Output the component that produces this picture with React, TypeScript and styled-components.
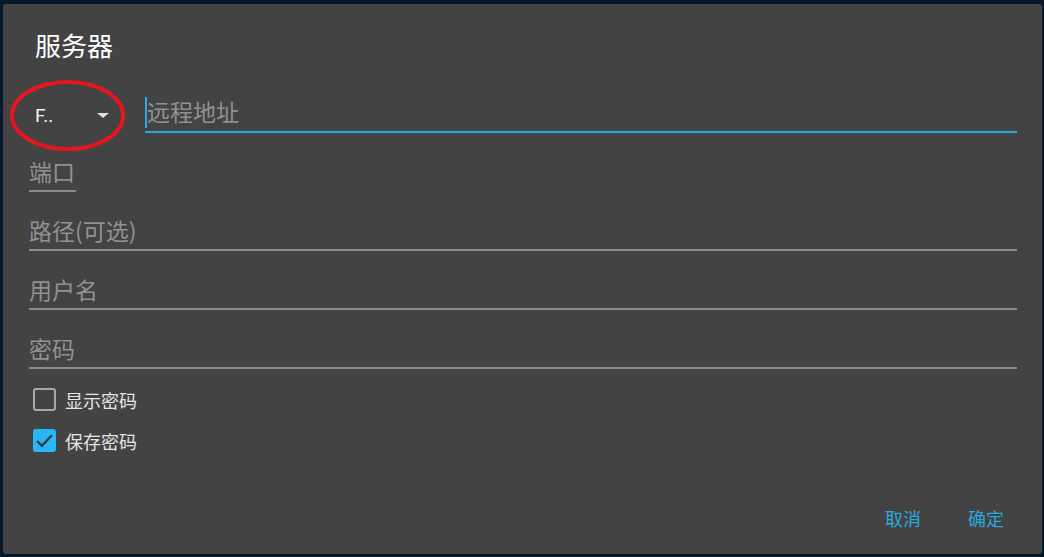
import React from "react";
import styled, { createGlobalStyle } from "styled-components";

const Global = createGlobalStyle`
  html, body { margin: 0; padding: 0; background: #06192a; }
  body { width: 1044px; height: 557px; overflow: hidden; }
  #root { padding: 4px 0 0 3px; }
  * { box-sizing: border-box; }
`;

const CJK = `"Noto Sans CJK SC", "Noto Sans", sans-serif`;

const Dialog = styled.div`
  width: 1039px;
  height: 550px;
  background: #434343;
  border-radius: 3px;
  padding: 28px 25px 0 26px;
  display: flex;
  flex-direction: column;
  font-family: ${CJK};
`;

const Title = styled.div`
  font-size: 26px;
  line-height: 26px;
  color: #ffffff;
  margin-left: 6px;
`;

const TopRow = styled.div`
  position: relative;
  display: flex;
  gap: 24px;
  margin-top: 32px;
  height: 43px;
`;

const Select = styled.div`
  align-self: flex-end;
  width: 92px;
  height: 36px;
  display: flex;
  align-items: center;
  justify-content: space-between;
  padding: 0 12px 0 6px;
  font-family: Roboto, "Noto Sans", sans-serif;
  font-size: 19px;
  color: #f2f2f2;
`;

const Arrow = styled.span`
  width: 0;
  height: 0;
  border-left: 6px solid transparent;
  border-right: 6px solid transparent;
  border-top: 5px solid #e0e0e0;
`;

const Ring = styled.svg`
  position: absolute;
  left: -22px;
  top: -14px;
  pointer-events: none;
`;

const Field = styled.div<{ $active?: boolean; $width?: number }>`
  display: flex;
  align-items: flex-end;
  flex: ${(p) => (p.$width ? "none" : "1")};
  width: ${(p) => (p.$width ? `${p.$width}px` : "auto")};
  padding-bottom: ${(p) => (p.$active ? 3 : 2)}px;
  border-bottom: 2px solid ${(p) => (p.$active ? "#29a9e1" : "#8b8b8b")};
`;

const Caret = styled.span`
  width: 2px;
  height: 31px;
  background: #29a9e1;
  flex: none;
`;

const Input = styled.input`
  flex: 1;
  min-width: 0;
  height: 31px;
  border: none;
  outline: none;
  background: transparent;
  padding: 0 0 4px 0;
  font-family: ${CJK};
  font-size: 23px;
  color: #ffffff;
  &::placeholder {
    color: #919191;
  }
`;

const FieldRow = styled.div`
  display: flex;
  margin-top: 24px;
`;

const Checks = styled.div`
  display: flex;
  flex-direction: column;
  margin-top: 10px;
`;

const CheckRow = styled.label`
  display: flex;
  align-items: center;
  height: 41px;
  padding-left: 4px;
  gap: 9px;
  font-size: 18px;
  color: #e4e4e4;
`;

const Box = styled.span<{ $checked?: boolean }>`
  width: 23px;
  height: 23px;
  border-radius: 3px;
  display: flex;
  align-items: center;
  justify-content: center;
  background: ${(p) => (p.$checked ? "#29b6f6" : "transparent")};
  border: ${(p) => (p.$checked ? "none" : "2px solid #a8a8a8")};
`;

const Actions = styled.div`
  margin-top: auto;
  display: flex;
  justify-content: flex-end;
  gap: 31px;
  padding: 0 5px 18px 0;
`;

const Button = styled.button`
  height: 36px;
  padding: 0 8px;
  border: none;
  background: transparent;
  font-family: ${CJK};
  font-size: 18px;
  color: #2aa8de;
  cursor: pointer;
`;

export default function App() {
  return (
    <>
      <Global />
      <Dialog>
        <Title>服务器</Title>
        <TopRow>
          <Select>
            <span>F..</span>
            <Arrow />
          </Select>
          <Field $active>
            <Caret />
            <Input placeholder="远程地址" />
          </Field>
          <Ring width="122" height="80" viewBox="0 0 122 80">
            <ellipse cx="60.5" cy="39.5" rx="55.5" ry="33.5" fill="none" stroke="#e8151f" strokeWidth="4" />
          </Ring>
        </TopRow>
        <FieldRow>
          <Field $width={47}>
            <Input placeholder="端口" />
          </Field>
        </FieldRow>
        <FieldRow>
          <Field>
            <Input placeholder="路径(可选)" />
          </Field>
        </FieldRow>
        <FieldRow>
          <Field>
            <Input placeholder="用户名" />
          </Field>
        </FieldRow>
        <FieldRow>
          <Field>
            <Input placeholder="密码" type="password" />
          </Field>
        </FieldRow>
        <Checks>
          <CheckRow>
            <Box />
            显示密码
          </CheckRow>
          <CheckRow>
            <Box $checked>
              <svg width="21" height="21" viewBox="0 0 24 24">
                <path d="M3.5 12.5l5.5 5.5L20.5 6" fill="none" stroke="#2c3a40" strokeWidth="2.6" />
              </svg>
            </Box>
            保存密码
          </CheckRow>
        </Checks>
        <Actions>
          <Button>取消</Button>
          <Button>确定</Button>
        </Actions>
      </Dialog>
    </>
  );
}
